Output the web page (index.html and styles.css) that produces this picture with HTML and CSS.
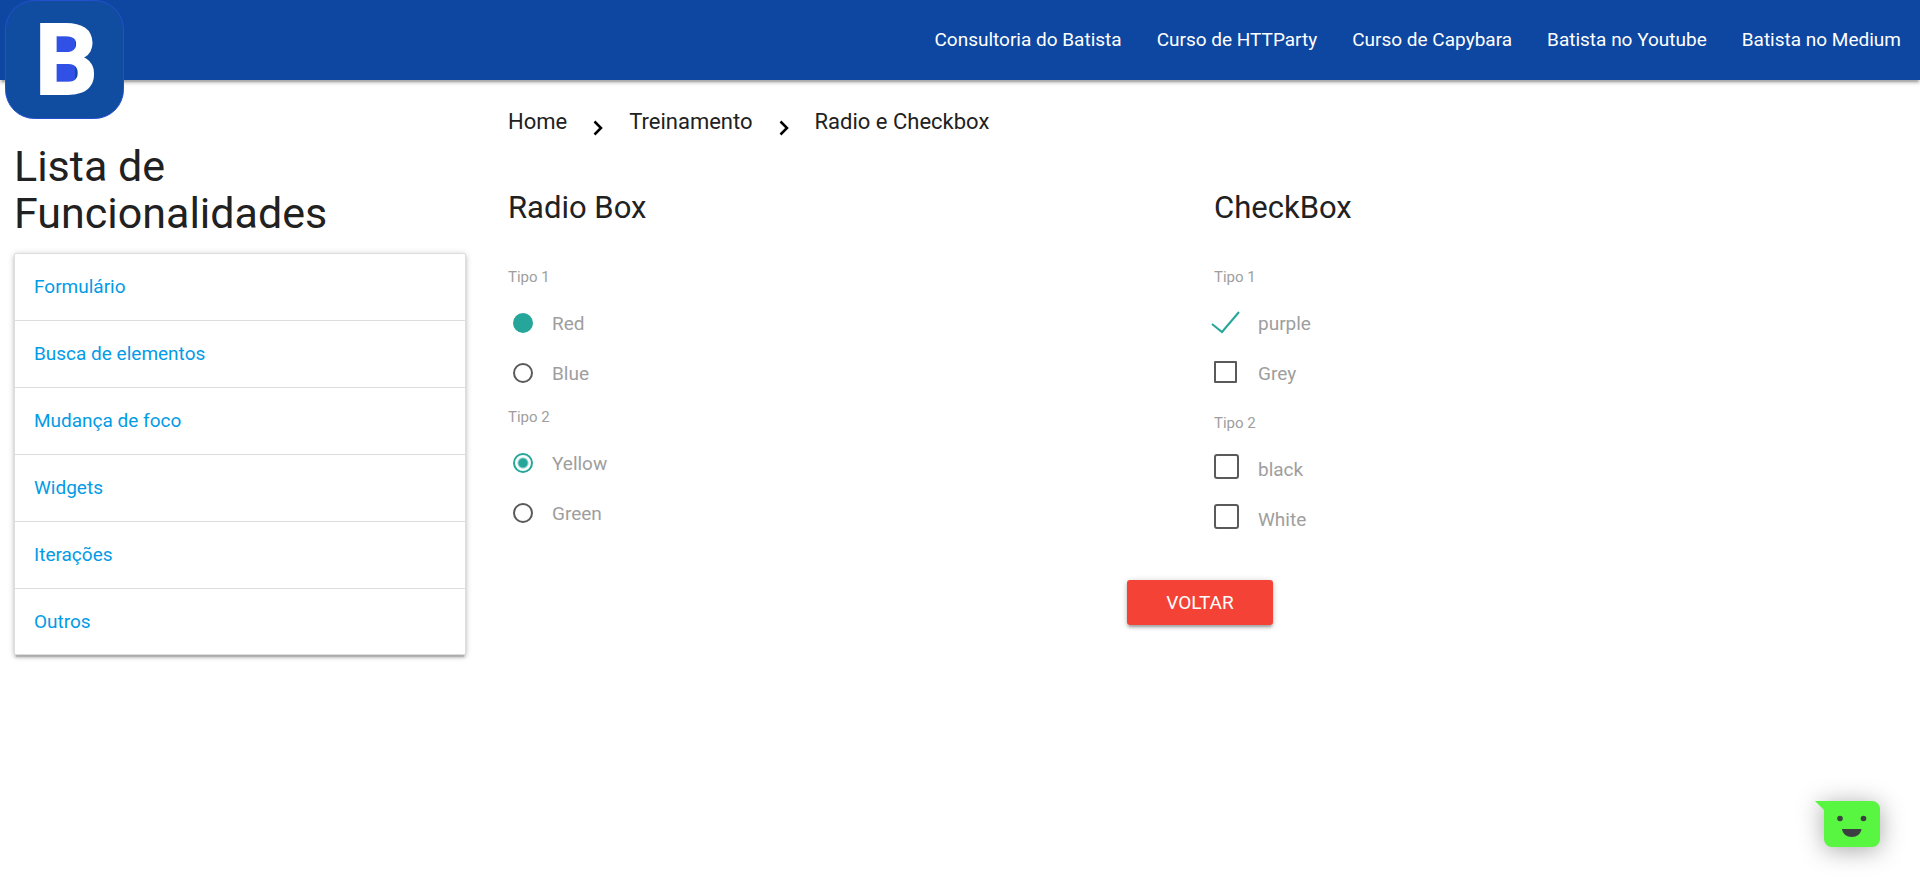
FILE: index.html
```
<!DOCTYPE html>
<html lang="pt-BR">
<head>
<meta charset="utf-8">
<title>Radio e Checkbox</title>
<link rel="stylesheet" href="styles.css">
</head>
<body>
<header class="topbar">
  <a class="brand" href="#" aria-label="Batista">
    <svg class="brand-logo" viewBox="0 0 119 119" aria-hidden="true">
      <rect x="0.500" y="0.500" width="118" height="118" rx="29" fill="#104ca0" stroke="#2450cf"/>
      <rect x="44" y="30" width="26" height="58" fill="#3050e6"/>
      <text class="brand-letter" x="30" y="94">B</text>
    </svg>
  </a>
  <nav class="topnav">
    <a href="#">Consultoria do Batista</a>
    <a href="#">Curso de HTTParty</a>
    <a href="#">Curso de Capybara</a>
    <a href="#">Batista no Youtube</a>
    <a href="#">Batista no Medium</a>
  </nav>
</header>
<div class="layout">
  <aside class="sidebar">
    <h1 class="sidebar-title">Lista de Funcionalidades</h1>
    <ul class="menu">
      <li><a href="#">Formulário</a></li>
      <li><a href="#">Busca de elementos</a></li>
      <li><a href="#">Mudança de foco</a></li>
      <li><a href="#">Widgets</a></li>
      <li><a href="#">Iterações</a></li>
      <li><a href="#">Outros</a></li>
    </ul>
  </aside>
  <main class="content">
    <nav class="crumbs" aria-label="Breadcrumb">
      <a href="#">Home</a>
      <svg class="chevron" viewBox="0 0 10 16" aria-hidden="true"><path d="M1.500 1.500L8 8l-6.500 6.500"/></svg>
      <a href="#">Treinamento</a>
      <svg class="chevron" viewBox="0 0 10 16" aria-hidden="true"><path d="M1.500 1.500L8 8l-6.500 6.500"/></svg>
      <a href="#">Radio e Checkbox</a>
    </nav>
    <form class="form">
      <div class="columns">
        <section class="column">
          <h2>Radio Box</h2>
          <fieldset class="group">
            <legend>Tipo 1</legend>
            <label class="option"><input class="radio radio-solid" type="radio" name="r1" checked>Red</label>
            <label class="option"><input class="radio" type="radio" name="r1">Blue</label>
          </fieldset>
          <fieldset class="group">
            <legend>Tipo 2</legend>
            <label class="option"><input class="radio radio-gap" type="radio" name="r2" checked>Yellow</label>
            <label class="option"><input class="radio" type="radio" name="r2">Green</label>
          </fieldset>
        </section>
        <section class="column">
          <h2>CheckBox</h2>
          <fieldset class="group group-spaced">
            <legend>Tipo 1</legend>
            <label class="option"><span class="check-wrap"><input class="check check-ticked" type="checkbox" checked><svg class="tick" viewBox="0 0 30 24" aria-hidden="true"><path d="M1 13l10 8L28 1"/></svg></span>purple</label>
            <label class="option"><span class="check-wrap"><input class="check" type="checkbox"></span>Grey</label>
          </fieldset>
          <fieldset class="group">
            <legend>Tipo 2</legend>
            <label class="option"><span class="check-wrap"><input class="check check-filled" type="checkbox"></span>black</label>
            <label class="option"><span class="check-wrap"><input class="check check-filled" type="checkbox"></span>White</label>
          </fieldset>
        </section>
      </div>
      <div class="actions"><button class="btn" type="button">VOLTAR</button></div>
    </form>
  </main>
</div>
<button class="chat" type="button" aria-label="Chat">
  <svg viewBox="0 0 65 46" aria-hidden="true">
    <path d="M0 0H57a8 8 0 0 1 8 8V38a8 8 0 0 1-8 8H17a8 8 0 0 1-8-8V9z" fill="#58f541"/>
    <circle cx="25" cy="17.500" r="2.800" fill="#3c4043"/>
    <circle cx="48.500" cy="17.500" r="2.800" fill="#3c4043"/>
    <path d="M27 28h19.500c-.5 5-5 8-9.700 8s-9.300-3-9.800-8z" fill="#3c4043"/>
  </svg>
</button>
</body>
</html>
```
FILE: styles.css
```
* { box-sizing: border-box; }

body {
  margin: 0;
  min-height: 100vh;
  font-family: Roboto, "Liberation Sans", sans-serif;
  font-size: 19px;
  line-height: 29px;
  color: #212121;
  background: #fff;
}

a { color: inherit; text-decoration: none; }

h1, h2 { font-weight: 400; line-height: 1.1; }

.topbar,
.menu,
.btn {
  box-shadow: 0 3px 3px rgba(0, 0, 0, .14), 0 4px 1px -2px rgba(0, 0, 0, .12), 0 1px 6px rgba(0, 0, 0, .2);
}

.topbar {
  position: relative;
  display: flex;
  justify-content: flex-end;
  height: 80px;
  background: #0d47a1;
}

.brand { position: absolute; top: 0; left: 5px; }
.brand-logo { display: block; width: 119px; height: 119px; }
.brand-letter { font-size: 98px; font-weight: 700; fill: #fff; stroke: #fff; stroke-width: 2; }

.topnav { display: flex; align-items: center; gap: 35px; padding-right: 19px; line-height: 28px; color: #fff; }

.layout { display: grid; grid-template-columns: 1fr 3fr; }

.sidebar { padding: 0 14px 19px; }
.sidebar-title { margin: 63px 0 16px; font-size: 43px; line-height: 47px; }

.menu {
  margin: 0;
  padding: 0;
  list-style: none;
  border: 1px solid #ddd;
  border-radius: 2px;
  background: #fff;
}
.menu li { padding: 18px 19px 19px; }
.menu li:last-child { padding-bottom: 18px; }
.menu li + li { border-top: 1px solid #ddd; }
.menu a { color: #039be5; }

.content { padding: 0 14px; }

.crumbs {
  display: flex;
  align-items: center;
  gap: 26px;
  padding: 23px 14px 0;
  font-size: 22px;
  line-height: 38px;
}
.chevron { width: 10px; height: 16px; margin-top: 12px; }
.chevron path { fill: none; stroke: #000; stroke-width: 2.5; }

.columns { display: grid; grid-template-columns: 1fr 1fr; }
.column { padding: 0 14px; }
.column h2 { margin: 50px 0 40px; font-size: 31px; }

.group { margin: 0; padding: 0 0 7px; border: 0; color: #9e9e9e; }
.group-spaced { padding-bottom: 13px; }
.group legend { display: block; padding: 0; font-size: 15px; line-height: 24px; }

.option {
  display: flex;
  align-items: center;
  height: 50px;
}
.group legend + .option { margin-top: 9px; }

.radio {
  appearance: none;
  width: 20px;
  height: 20px;
  margin: 0 19px 0 5px;
  border: 2px solid #5a5a5a;
  border-radius: 50%;
}
.radio-solid { border-color: #26a69a; background: #26a69a; }
.radio-gap { border-color: #26a69a; background: radial-gradient(circle, #26a69a 4px, transparent 6px); }

.check-wrap { position: relative; display: flex; width: 44px; margin-bottom: 3px; }
.check {
  appearance: none;
  width: 23px;
  height: 22px;
  margin: 0;
  border: 2px solid #5a5a5a;
  border-radius: 1px;
}
.check-filled { width: 25px; height: 25px; margin-bottom: 2px; border-radius: 3px; }
.check-ticked { border-color: transparent; }
.tick { position: absolute; top: 0; left: -3px; width: 30px; height: 24px; pointer-events: none; }
.tick path { fill: none; stroke: #26a69a; stroke-width: 2; }

.actions { display: flex; justify-content: center; padding-top: 29px; }
.btn {
  padding: 0 39px;
  border: 0;
  border-radius: 3px;
  background: #f44336;
  color: #fff;
  font: inherit;
  line-height: 45px;
}

.chat {
  position: fixed;
  right: 40px;
  bottom: 41px;
  padding: 0;
  border: 0;
  background: none;
}
.chat svg { display: block; width: 65px; height: 46px; overflow: visible; filter: drop-shadow(0 3px 12px rgba(0, 0, 0, .35)); }
```
